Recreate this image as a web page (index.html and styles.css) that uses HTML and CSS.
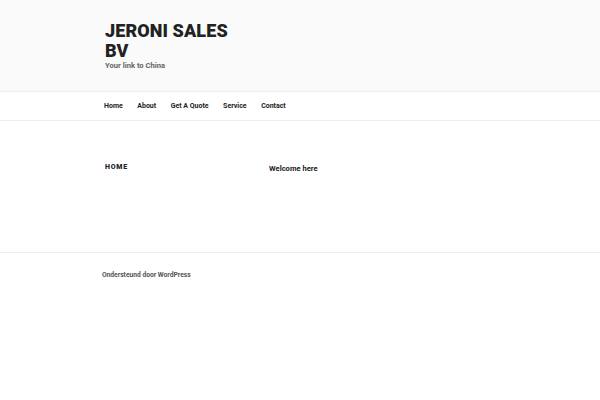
FILE: index.html
```html
<!DOCTYPE html>
<html lang="nl">
<head>
<meta charset="utf-8">
<title>Jeroni Sales BV</title>
<link rel="stylesheet" href="styles.css">
</head>
<body>
<header class="site-header">
  <div class="branding">
    <div class="wrap">
      <h1 class="site-title">Jeroni Sales<br>BV</h1>
      <p class="site-desc">Your link to China</p>
    </div>
  </div>
  <nav class="main-nav">
    <ul class="menu">
      <li>Home</li>
      <li>About</li>
      <li>Get A Quote</li>
      <li>Service</li>
      <li>Contact</li>
    </ul>
  </nav>
</header>
<main class="content">
  <h2 class="page-title">Home</h2>
  <p class="entry">Welcome here</p>
</main>
<footer class="site-footer">
  <p class="powered">Ondersteund door WordPress</p>
</footer>
</body>
</html>
```
FILE: styles.css
```css
* { box-sizing: border-box; }
body {
  margin: 0;
  font-family: Roboto, "Liberation Sans", Arial, sans-serif;
  color: #222;
  background: #fff;
}
.branding {
  background: #fafafa;
  height: 91px;
  padding: 21px 0 0 105px;
}
.site-title {
  margin: 0;
  font-size: 18px;
  line-height: 20px;
  font-weight: 900;
  letter-spacing: 0.1px;
  text-transform: uppercase;
  color: #222;
}
.site-desc {
  margin: 0;
  font-size: 7.6px;
  font-weight: 700;
  color: #666;
}
.main-nav {
  border-top: 1px solid #eee;
  border-bottom: 1px solid #eee;
  height: 30px;
  display: flex;
  align-items: center;
}
.menu {
  list-style: none;
  margin: 0;
  padding: 0 0 0 104px;
  display: flex;
  gap: 14.5px;
}
.menu li {
  font-size: 7px;
  font-weight: 700;
  color: #222;
}
.content {
  display: flex;
  height: 132px;
  padding: 42px 0 0 105px;
  border-bottom: 1px solid #eee;
}
.page-title {
  margin: 0;
  width: 164px;
  font-size: 7px;
  font-weight: 900;
  letter-spacing: 0.8px;
  text-transform: uppercase;
}
.entry {
  margin: 1px 0 0;
  font-size: 7.6px;
  font-weight: 700;
}
.site-footer {
  padding: 18px 0 0 102px;
}
.powered {
  margin: 0;
  font-size: 6.7px;
  font-weight: 700;
  color: #555;
}
```
